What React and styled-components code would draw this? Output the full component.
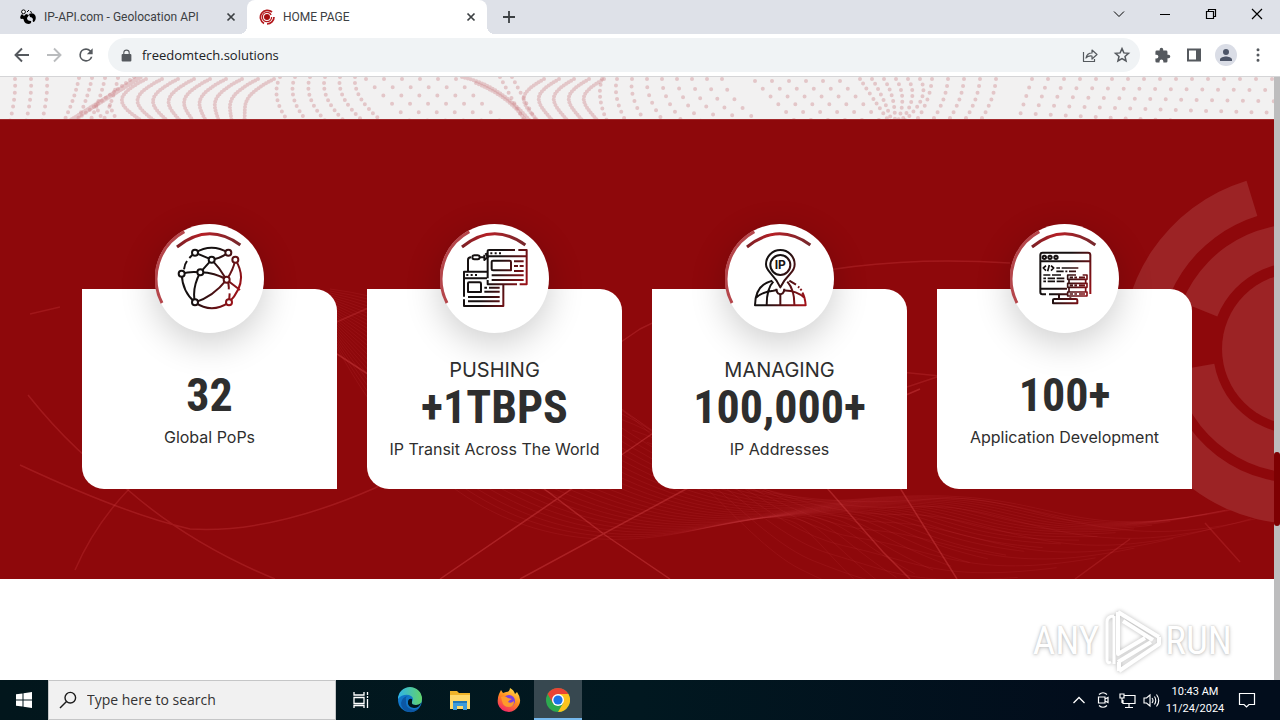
import React from "react";
import styled, { createGlobalStyle, css } from "styled-components";

const ui = '"Open Sans", "Noto Sans", sans-serif';
const tabFont = 'Roboto, "Noto Sans", sans-serif';
const geo = 'Inter, "Open Sans", sans-serif';
const condensed = '"Roboto Condensed", "DejaVu Sans Condensed", sans-serif';

const GlobalStyle = createGlobalStyle`
  *, *::before, *::after { box-sizing: border-box; }
  body { margin: 0; background: #fff; font-family: ${ui}; }
  button, input { font: inherit; color: inherit; }
  svg { display: block; }
`;

const Screen = styled.div`
  min-height: 100vh;
  display: flex;
  flex-direction: column;
`;

const PlainButton = styled.button`
  border: 0;
  padding: 0;
  background: none;
  display: flex;
  align-items: center;
  justify-content: center;
  flex: none;
`;

/* ---------- browser chrome ---------- */

const TabStrip = styled.div`
  display: flex;
  height: 34px;
  background: #dee1e8;
  color: #3c4043;
`;

const Tab = styled.div`
  position: relative;
  display: flex;
  align-items: center;
  gap: 8px;
  width: ${(p) => (p.$active ? 240 : 247)}px;
  padding: 0 8px 0 ${(p) => (p.$active ? 12 : 20)}px;
  flex: 0 1 auto;
  ${(p) =>
    p.$active &&
    css`
      background: #fff;
      border-radius: 8px 8px 0 0;
      &::before,
      &::after {
        content: "";
        position: absolute;
        bottom: 0;
        width: 8px;
        height: 8px;
      }
      &::before {
        left: -8px;
        background: radial-gradient(circle at 0 0, transparent 8px, #fff 8px);
      }
      &::after {
        right: -8px;
        background: radial-gradient(circle at 100% 0, transparent 8px, #fff 8px);
      }
    `}
`;

const TabTitle = styled(PlainButton)`
  flex: 1;
  justify-content: flex-start;
  font: 12px/16px ${tabFont};
  white-space: nowrap;
  overflow: hidden;
`;

const TabClose = styled(PlainButton)`
  width: 16px;
  height: 16px;
`;

const NewTab = styled(PlainButton)`
  width: 28px;
  margin-left: 8px;
`;

const WindowControls = styled.div`
  display: flex;
  margin-left: auto;
  color: #000;
`;

const WindowButton = styled(PlainButton)`
  width: 46px;
  height: 28px;
`;

const Toolbar = styled.div`
  display: flex;
  align-items: center;
  height: 43px;
  padding: 0 6px;
  background: #fff;
  border-bottom: 1px solid #d5d5d7;
  color: #55595e;
`;

const ToolButton = styled(PlainButton)`
  width: 32px;
  height: 32px;
  color: ${(p) => (p.$faded ? "#babcbe" : "inherit")};
`;

const AddressBar = styled.label`
  flex: 1;
  display: flex;
  align-items: center;
  height: 34px;
  margin: 0 6px;
  padding: 0 2px 0 12px;
  border-radius: 17px;
  background: #f0f3f5;
`;

const AddressInput = styled.input`
  flex: 1;
  min-width: 0;
  margin-left: 9px;
  padding: 0;
  border: 0;
  outline: 0;
  background: none;
  color: #202124;
  font: 13px/20px ${ui};
`;

const Avatar = styled.span`
  display: flex;
  align-items: center;
  justify-content: center;
  width: 22px;
  height: 22px;
  border-radius: 50%;
  background: #dadde6;
  color: #4d5568;
`;

/* ---------- page ---------- */

const Viewport = styled.div`
  flex: 1;
  display: flex;
`;

const Page = styled.main`
  flex: 1;
  min-width: 0;
  display: flex;
  flex-direction: column;
`;

const DottedBand = styled.div`
  height: 42px;
  background: #f2f1f1;
  overflow: hidden;
`;

const Stats = styled.section`
  position: relative;
  min-height: 460px;
  padding: 170px 16px 90px;
  background: #8e080b;
  overflow: hidden;
`;

const Backdrop = styled.svg`
  position: absolute;
  inset: 0;
  width: 100%;
  height: 100%;
`;

const CardGrid = styled.div`
  position: relative;
  max-width: 1110px;
  margin: 0 auto;
  display: grid;
  grid-template-columns: repeat(4, 1fr);
  gap: 30px;
`;

const Card = styled.article`
  position: relative;
  display: flex;
  flex-direction: column;
  align-items: center;
  justify-content: center;
  min-height: 200px;
  padding-top: 41px;
  background: #fff;
  border-radius: 0 22px 0 22px;
  color: #2e2e2e;
  text-align: center;
  white-space: nowrap;
`;

const Medallion = styled.div`
  position: absolute;
  top: -65px;
  left: 50%;
  margin-left: -55px;
  width: 109px;
  height: 109px;
  border-radius: 50%;
  background: #fff;
  box-shadow: 0 10px 36px rgba(0, 0, 0, 0.2);
`;

const Kicker = styled.span`
  font: 20px/24px ${geo};
`;

const Figure = styled.strong`
  margin-bottom: 5px;
  font: bold 46px/50px ${condensed};
`;

const Caption = styled.span`
  font: 16px/24px ${geo};
`;

const BlankArea = styled.div`
  flex: 1;
  min-height: 101px;
  display: flex;
  align-items: center;
  justify-content: flex-end;
  padding: 22px 42px 0 0;
  background: #fff;
`;

const Watermark = styled.div`
  display: flex;
  align-items: center;
  gap: 2px;
  color: #fff;
  font: 39px/60px ${condensed};
  text-shadow: 0 0 2px #bdbdbd, 0 1px 4px #c8c8c8;
`;

const ScrollTrack = styled.div`
  width: 6px;
  flex: none;
  display: flex;
  flex-direction: column;
  background: #bdbdbe;
`;

const ScrollThumb = styled.div`
  height: 74px;
  margin-top: 375px;
  border-radius: 3px;
  background: #7e0002;
`;

/* ---------- taskbar ---------- */

const Taskbar = styled.footer`
  display: flex;
  height: 40px;
  background: linear-gradient(90deg, #02161c, #011820 50%, #020d1c 85%);
  color: #fff;
`;

const TaskButton = styled(PlainButton)`
  width: ${(p) => p.$width || 49}px;
  ${(p) =>
    p.$active &&
    css`
      background: #374850;
      border-bottom: 2px solid #76b9ed;
      padding-top: 2px;
    `}
`;

const SearchBox = styled.label`
  display: flex;
  align-items: center;
  gap: 10px;
  width: 288px;
  padding: 0 10px;
  background: #f1f1f1;
  border: 1px solid #c5c6c7;
  color: #1b1b1b;
`;

const SearchInput = styled.input`
  flex: 1;
  min-width: 0;
  border: 0;
  padding: 0;
  outline: 0;
  background: none;
  font: 14px/20px ${ui};
  &::placeholder {
    color: #333;
    opacity: 1;
  }
`;

const Tray = styled.div`
  display: flex;
  margin-left: auto;
  padding-right: 13px;
`;

const Clock = styled.time`
  width: 64px;
  display: flex;
  flex-direction: column;
  justify-content: center;
  text-align: center;
  white-space: nowrap;
  font: 11px/17px ${tabFont};
`;

/* ---------- small drawings ---------- */

const Line = ({ size = 16, w = 2, d, box = 16, children, ...rest }) => (
  <svg width={size} height={size} viewBox={`0 0 ${box} ${box}`} fill="none" stroke="currentColor" strokeWidth={w} aria-hidden="true" {...rest}>
    {d && <path d={d} />}
    {children}
  </svg>
);

const Solid = ({ size = 18, d, box = 24 }) => (
  <svg width={size} height={size} viewBox={`0 0 ${box} ${box}`} fill="currentColor" aria-hidden="true">
    <path d={d} />
  </svg>
);

const CloseGlyph = () => <Line size={16} d="M4.5 4.5l7 7M11.5 4.5l-7 7" w={1.7} />;

const PawIcon = () => (
  <svg width="16" height="16" viewBox="0 0 16 16" aria-hidden="true">
    <path d="M2 5Q-1 8 1 10Q4 9 4 12Q5 15 9 15Q12 14 11 12Q7 12 7 9L9 6L6 5L4 7Z" />
    <path d="M9 5Q13 3 15 6Q17 10 14 13Q12 13 13 10Q12 8 10 8Z" />
    <circle cx="3.500" cy="2.800" r="1.900" fill="#fff" stroke="#000" />
    <path d="M7 3l2-2M10 2.500l2 1" stroke="#000" />
  </svg>
);

const SwirlIcon = () => (
  <svg width="16" height="16" viewBox="0 0 16 16" fill="none" stroke="#b3191d" aria-hidden="true">
    <circle cx="8" cy="8" r="3" fill="#a50d11" stroke="none" />
    <circle cx="8" cy="8" r="4.6" strokeWidth="1.300" strokeDasharray="26 3" />
    <path d="M13 3A7 7 0 1 0 5 14.400M8 15A7 7 0 0 0 15 8" strokeWidth="1.700" />
  </svg>
);

/* ---------- medallion art, drawn on a 327-unit circle ---------- */

const Ring = () => (
  <g fill="none">
    <path d="M133 65A160 160 0 0 0 66 279" stroke="#b5464b" strokeWidth="9" />
    <path d="M111 111Q205 35 301 105" stroke="url(#arc)" strokeWidth="9" />
  </g>
);

const Art = ({ children }) => (
  <svg width="109" height="109" viewBox="45 42 327 327" aria-hidden="true">
    <defs>
      <linearGradient id="arc" gradientUnits="userSpaceOnUse" x1="110" y1="0" x2="302" y2="0">
        <stop offset="0" stopColor="#7b2025" />
        <stop offset="0.4" stopColor="#b51f26" />
        <stop offset="1" stopColor="#74282c" />
      </linearGradient>
      <linearGradient id="ink" gradientUnits="userSpaceOnUse" x1="120" y1="150" x2="305" y2="230">
        <stop offset="0.45" stopColor="#151010" />
        <stop offset="1" stopColor="#a11219" />
      </linearGradient>
    </defs>
    <Ring />
    <g fill="none" stroke="url(#ink)" strokeWidth="6" strokeLinejoin="round">
      {children}
    </g>
  </svg>
);

const NODES = [[165, 128], [265, 128], [215, 149], [286, 149], [125, 191], [181, 187], [260, 209], [165, 277], [267, 277]];

const GlobeArt = () => (
  <Art>
    <path d="M165 128Q215 98 265 128M165 128L215 149Q240 146 265 128M286 149Q328 215 267 277M286 149Q280 180 260 209M215 149Q240 175 260 209M215 149L181 187M125 191Q150 183 181 187Q225 188 260 209M181 187Q155 235 165 277Q220 260 260 209L300 240M262 209Q268 228 266 238M269 250L267 277M165 277Q215 312 267 277M125 191Q127 245 165 277M132 178Q134 162 141 153M148 144L162 130" />
    {NODES.map(([x, y]) => (
      <circle key={`${x}-${y}`} cx={x} cy={y} r="9" fill="#fff" />
    ))}
  </Art>
);

const WindowsArt = () => (
  <Art>
    <path d="M188 205V122Q188 120 192 120H270M280 120H305V223H284M276 223H188V210M188 139H303M196 130h6M209 130h6M222 130h6" />
    <path d="M200 155Q200 152 204 152H254Q258 152 258 156V181H204Q200 181 200 177ZM267 154H296M267 168H279M284 168H296M267 183H296M200 196H296M200 210H296" />
    <path d="M188 185H117V260M117 268V288H235V223M117 205H186M124 195h6M137 195h6M150 195h6M129 185V150Q129 142 138 142M142 142Q142 136 148 136H158Q164 136 164 142Q164 148 158 148H148Q142 148 142 142M164 142H176M178 134V150L188 142L182 129" />
    <path d="M129 220Q129 217 132 217H164Q168 217 168 221V246H129ZM178 233H186M192 233H224M178 245H224M129 261H224M129 274H224" />
  </Art>
);

const PinFont = styled.text`
  font: bold 36px ${geo};
`;

const PinArt = () => (
  <Art>
    <path d="M211 232Q201 210 182 190Q168 175 168 163A43 43 0 0 1 254 163Q254 178 240 192Q222 210 211 232Z" />
    <circle cx="211" cy="165" r="30" />
    <PinFont x="211" y="178" textAnchor="middle" fill="#191314" stroke="none">IP</PinFont>
    <path d="M187 212Q136 224 135 286H287Q285 260 277 248M238 212L258 224M264 230l4 3M271 237l4 4M137 264Q157 245 190 242Q198 240 202 242M220 242Q257 240 284 264M190 215Q170 235 170 286M232 215Q254 240 253 286M211 254V286" />
    <path d="M199 236Q199 244 204 250L211 253L218 250Q223 244 223 236" />
  </Art>
);

const MonitorArt = () => (
  <Art>
    <path d="M153 253H142Q136 253 136 246V135Q136 128 143 128H279Q286 128 286 135V252M136 154H286M136 236H216M162 253H216M192 256V267M226 262V267M174 270Q174 267 178 267H243Q247 267 247 271V280H174Z" />
    <circle cx="148" cy="142" r="5" />
    <circle cx="165" cy="142" r="5" />
    <circle cx="183" cy="142" r="5" />
    <path d="M153 167L145 174L153 182M168 167L176 174L168 182M163 165L158 184M184 174H195M200 174H250M184 184H206M211 184H217M222 184H243M145 195H166M171 195H198M145 205H153M158 205H180M185 205H208M145 214H153M158 214H180M185 214H208" strokeWidth="5" />
    <path d="M243 195H218V208H276V195H263M218 220H276V232H218ZM218 246H276V258H218ZM222 208V220M272 208V220M222 232V246M272 232V246M224 202H234M238 202H246M252 202H270M224 226H234M238 226H246M252 226H270M224 252H234M238 252H246M252 252H270" strokeWidth="5" />
  </Art>
);

/* ---------- dotted band ---------- */

const dottedCurves = [];
const addRun = (from, to, step, make) => {
  for (let x = from; x <= to; x += step) dottedCurves.push(make(x));
};
addRun(15, 62, 16, (x) => ({ d: `M${x} 2Q${x + 1} 20 ${x - 5} 44`, gap: 7 }));
addRun(78, 126, 13, (x) => ({ d: `M${x + 1} 1Q${x - 4} 24 ${x - 14} 44`, gap: 6 }));
dottedCurves.push({ d: "M140 0L70 44", gap: 2, w: 5 }, { d: "M134 0L80 40", gap: 5 });
addRun(96, 112, 14, (x) => ({ d: `M${x} 28Q${x + 2} 36 ${x + 8} 44`, gap: 6 }));
addRun(146, 274, 16, (x) => ({ d: `M${x} 2C${x - 35} 20 ${x - 28} 28 ${x - 4 - (x - 146) / 5} 44`, gap: 3 }));
addRun(280, 355, 15, (x) => ({ d: `M${x} 0Q${x - 10 + (x - 280) / 10} 20 ${x + 8 + (x - 280) / 4} 44`, gap: 6 }));
addRun(366, 470, 18, (x) => ({ d: `M${x} 2L${x + 44} 44`, gap: 12 }));
dottedCurves.push({ d: "M462 0Q500 8 530 44", gap: 3 }, { d: "M476 6Q510 20 526 44", gap: 3 });
addRun(500, 514, 12, (x) => ({ d: `M${x} 0L${x + 24} 44`, gap: 6 }));
addRun(528, 592, 15, (x) => ({ d: `M${x + 16} 2C${x - 12} 18 ${x - 8} 24 ${x + 10} 44`, gap: 3 }));
addRun(602, 735, 15, (x) => ({ d: `M${x} 2Q${x - 6 + (x - 602) / 10} 20 ${x + 5 + (x - 602) / 4} 44`, gap: 6 + (x - 602) / 20 }));
addRun(755, 850, 17, (x) => ({ d: `M${x} 4L${x + 40} 44`, gap: 11 }));
addRun(860, 920, 12, (x) => ({ d: `M${x} 2Q${x + 12} 20 ${890 + (x - 860) / 5} 46`, gap: 6 }));
addRun(932, 1010, 16, (x) => ({ d: `M${x} 2Q${x - 2} 24 ${x - 16} 44`, gap: 7 }));
addRun(1028, 1290, 16, (x) => ({ d: `M${x + 4} 2L${x - 10 - (x - 1028) / 20} 44`, gap: 9 + (x - 1028) / 60 }));

const DotPattern = () => (
  <svg width="100%" height="42" viewBox="0 0 1274 42" preserveAspectRatio="xMidYMid slice" fill="none" stroke="#cf8a90" strokeLinecap="round" aria-hidden="true">
    {dottedCurves.map((c, i) => (
      <path key={i} d={c.d} strokeWidth={c.w || 4} strokeOpacity={0.42} strokeDasharray={`0 ${c.gap}`} />
    ))}
  </svg>
);

/* ---------- red section backdrop ---------- */

const mix = (a, b, t) => a.map((v, i) => v + (b[i] - v) * t);
const cubic = (p) => `M${p[0]} ${p[1]}C${p[2]} ${p[3]} ${p[4]} ${p[5]} ${p[6]} ${p[7]}S${p[8]} ${p[9]} ${p[10]} ${p[11]}`;
const bundle = (a, b, n) => Array.from({ length: n }, (_, i) => cubic(mix(a, b, i / (n - 1))));

const meshCurves = [
  ...bundle([330, 215, 440, 430, 590, 435, 700, 410, 790, 400, 860, 466], [330, 170, 560, 200, 640, 400, 860, 380, 1040, 440, 1280, 380], 24),
  ...bundle([560, 250, 660, 300, 740, 420, 800, 450, 860, 470, 940, 478], [690, 360, 760, 370, 820, 390, 930, 380, 1100, 450, 1290, 390], 10),
];

const sector = (r1, r2, a1, a2) => {
  const cx = 1298;
  const cy = 230;
  const pt = (r, a) => `${cx + r * Math.cos((a * Math.PI) / 180)} ${cy + r * Math.sin((a * Math.PI) / 180)}`;
  return `M${pt(r2, a1)}A${r2} ${r2} 0 0 1 ${pt(r2, a2)}L${pt(r1, a2)}A${r1} ${r1} 0 0 0 ${pt(r1, a1)}Z`;
};

const RedBackdrop = () => (
  <Backdrop viewBox="0 0 1274 460" preserveAspectRatio="xMidYMid slice" fill="none" aria-hidden="true">
    <g stroke="#c4383b" strokeOpacity="0.18" strokeWidth="1">
      {meshCurves.map((d, i) => (
        <path key={i} d={d} />
      ))}
    </g>
    <g stroke="#d8484b" strokeOpacity="0.4" strokeWidth="1.5">
      <path d="M440 460L633 328L760 240M520 460L688 369L920 270M337 235L543 369L605 416L670 460M720 235L827 369L883 433L910 460M900 369L957 460" />
      <path d="M28 276Q75 335 128 371Q190 425 275 460M20 346Q125 395 190 410Q270 415 375 369Q510 300 640 210Q800 130 1010 144M330 206L375 186" strokeOpacity="0.28" />
      <path d="M75 451Q95 405 130 369M1130 420L1075 460M1205 404L1240 443M900 253L940 257M907 268L940 257M30 195L60 188" strokeOpacity="0.24" />
    </g>
    <g fill="#9c2325">
      <circle cx="1298" cy="230" r="76" />
      <path d={sector(87, 125, 202, 290)} />
      <path d={sector(85, 124, 80, 170)} />
      <path d={sector(139, 176, 174, 253)} />
      <path d={sector(134, 175, 80, 174)} />
    </g>
    <path d="M0 0.5H1274" stroke="#a2282b" />
  </Backdrop>
);

const STATS = [
  { art: GlobeArt, figure: "32", caption: "Global PoPs" },
  { art: WindowsArt, kicker: "PUSHING", figure: "+1TBPS", caption: "IP Transit Across The World" },
  { art: PinArt, kicker: "MANAGING", figure: "100,000+", caption: "IP Addresses" },
  { art: MonitorArt, figure: "100+", caption: "Application Development" },
];

/* ---------- application icons ---------- */

const EdgeIcon = () => (
  <svg width="26" height="26" viewBox="0 0 26 26" aria-hidden="true">
    <defs>
      <linearGradient id="edgeTop" x1="0" x2="1">
        <stop offset="0" stopColor="#2fb4e9" />
        <stop offset="1" stopColor="#63d36b" />
      </linearGradient>
    </defs>
    <circle cx="13" cy="13" r="12" fill="#1176c8" />
    <path d="M1 12A12 12 0 0 1 25 12Q25 18 19 18Q14 18 15 15Q18 10 12 8Q5 7 1 12Z" fill="url(#edgeTop)" />
    <path d="M9 13Q8 20 14 22Q19 24 23 20Q19 26 12 25Q4 23 4 16Q5 10 11 9Q8 10 9 13Z" fill="#0c57a4" />
    <path d="M15 15Q14 18 19 18Q22 18 24 16Q22 21 17 21Q10 20 11 14Q12 11 15 12Z" fill="#02161c" />
  </svg>
);

const FolderIcon = () => (
  <svg width="24" height="24" viewBox="0 0 24 24" aria-hidden="true">
    <path d="M2 3H9L11 5H22V21H2Z" fill="#f0b429" />
    <path d="M2 7H22V21H2Z" fill="#ffd96b" />
    <path d="M5 13H19V22H15V18H9V22H5Z" fill="#3d9bdc" />
    <path d="M5 13H19V15H5Z" fill="#2277b8" />
  </svg>
);

const FirefoxIcon = () => (
  <svg width="26" height="26" viewBox="0 0 26 26" aria-hidden="true">
    <defs>
      <linearGradient id="fox" x1="0.8" y1="0" x2="0.3" y2="1">
        <stop offset="0" stopColor="#ffe14a" />
        <stop offset="0.5" stopColor="#ff8a1e" />
        <stop offset="1" stopColor="#f4236a" />
      </linearGradient>
    </defs>
    <path d="M3 7L5 3L7 6L10 5Q14 5 14 1Q18 3 19 7L21 5Q26 12 23 18Q19 25 13 25Q4 24 2 17Q1 12 3 7Z" fill="url(#fox)" />
    <circle cx="13" cy="14" r="6" fill="#7a3fe0" />
    <path d="M5 10Q9 8 12 11L16 12Q13 13 12 15Q15 17 18 14Q18 20 13 20Q7 20 6 14Z" fill="#ff9a2b" />
  </svg>
);

const ChromeIcon = () => (
  <svg width="24" height="24" viewBox="0 0 24 24" aria-hidden="true">
    <circle cx="12" cy="12" r="12" fill="#2da94f" />
    <path d="M1.6 6A12 12 0 0 1 22.4 6H12L6.8 15Z" fill="#e94335" />
    <path d="M22.4 6A12 12 0 0 1 12 24L17.2 15L12 6Z" fill="#fcc31e" />
    <circle cx="12" cy="12" r="6" fill="#fff" />
    <circle cx="12" cy="12" r="4.6" fill="#1a73e8" />
  </svg>
);

const LogoSvg = styled.svg`
  filter: drop-shadow(0 0 2px #b9b9b9);
`;

const PlayLogo = () => (
  <LogoSvg width="62" height="66" viewBox="0 0 62 66" fill="none" stroke="#fff" strokeWidth="4" strokeLinejoin="round" aria-hidden="true">
    <path d="M13 8V56M13 8Q6 8 6 14V52Q6 56 10 54" strokeWidth="3" />
    <path d="M17 4L58 29M17 4V46L44 30M22 13L52 32M18 63L58 36L58 29M17 54L50 34M18 63V54" />
  </LogoSvg>
);

export default function App() {
  return (
    <Screen>
      <GlobalStyle />
      <TabStrip>
        <Tab>
          <PawIcon />
          <TabTitle>IP-API.com - Geolocation API</TabTitle>
          <TabClose aria-label="Close tab"><CloseGlyph /></TabClose>
        </Tab>
        <Tab $active>
          <SwirlIcon />
          <TabTitle>HOME PAGE</TabTitle>
          <TabClose aria-label="Close tab"><CloseGlyph /></TabClose>
        </Tab>
        <NewTab aria-label="New tab"><Line d="M8 2V14M2 8H14" w={1.8} /></NewTab>
        <WindowControls>
          <WindowButton aria-label="Search tabs"><Line d="M3 5.5L8 10.5L13 5.5" w={1} /></WindowButton>
          <WindowButton aria-label="Minimize"><Line d="M3 8.5H13" w={1} /></WindowButton>
          <WindowButton aria-label="Restore"><Line d="M3.5 5.5H10.5V12.5H3.5ZM5.5 5.5V3.5H12.5V10.5H10.5" w={1.2} /></WindowButton>
          <WindowButton aria-label="Close"><Line d="M3 3L13 13M13 3L3 13" w={1.2} /></WindowButton>
        </WindowControls>
      </TabStrip>

      <Toolbar>
        <ToolButton aria-label="Back"><Line d="M15 8H2M8 1.5L1.5 8L8 14.5" w={1.9} /></ToolButton>
        <ToolButton $faded aria-label="Forward"><Line d="M1 8H14M8 1.5L14.5 8L8 14.5" w={1.9} /></ToolButton>
        <ToolButton aria-label="Reload"><Solid size={20} d="M17.65 6.35A7.96 7.96 0 0 0 12 4a8 8 0 1 0 7.73 10h-2.08A6 6 0 1 1 12 6c1.66 0 3.14.69 4.22 1.78L13 11h7V4z" /></ToolButton>
        <AddressBar>
          <Solid size={13} box={24} d="M19 9h-1V7A6 6 0 0 0 6 7v2H5a2 2 0 0 0-2 2v10a2 2 0 0 0 2 2h14a2 2 0 0 0 2-2V11a2 2 0 0 0-2-2zM8 7a4 4 0 0 1 8 0v2H8z" />
          <AddressInput aria-label="Address" defaultValue="freedomtech.solutions" />
          <ToolButton aria-label="Share"><Line d="M1.5 5V14.5H12.5V12M4 11Q5 6 10 6V3L15 7.5L10 12V9Q6 8.500 4 11Z" w={1.2} strokeLinejoin="round" /></ToolButton>
          <ToolButton aria-label="Bookmark"><Line box={24} size={18} w={2} d="M12 3.500L14.500 9.200L20.700 9.800L16 13.900L17.400 20L12 16.800L6.600 20L8 13.900L3.300 9.800L9.500 9.200Z" /></ToolButton>
        </AddressBar>
        <ToolButton aria-label="Extensions"><Solid size={17} d="M20.500 11H19V7a2 2 0 0 0-2-2h-4V3.500a2.500 2.500 0 0 0-5 0V5H4a2 2 0 0 0-2 2v3.800h1.500a2.700 2.700 0 0 1 0 5.400H2V20a2 2 0 0 0 2 2h3.800v-1.500a2.700 2.700 0 0 1 5.400 0V22H17a2 2 0 0 0 2-2v-4h1.500a2.500 2.500 0 0 0 0-5z" /></ToolButton>
        <ToolButton aria-label="Side panel"><Line w={2}><path d="M2 2.500H14V13.500H2Z" /><path d="M12 2V14" strokeWidth="4" /></Line></ToolButton>
        <ToolButton aria-label="Profile"><Avatar><Solid size={18} d="M12 12a4 4 0 1 0 0-8 4 4 0 0 0 0 8zm0 2c-3 0-8 1.400-8 4v2h16v-2c0-2.600-5-4-8-4z" /></Avatar></ToolButton>
        <ToolButton aria-label="Menu"><Solid size={20} d="M12 7.500a1.800 1.800 0 1 0 0-3.600 1.800 1.800 0 0 0 0 3.600zm0 6.300a1.800 1.800 0 1 0 0-3.600 1.800 1.800 0 0 0 0 3.600zm0 6.300a1.800 1.800 0 1 0 0-3.600 1.800 1.800 0 0 0 0 3.600z" /></ToolButton>
      </Toolbar>

      <Viewport>
        <Page>
          <DottedBand><DotPattern /></DottedBand>
          <Stats>
            <RedBackdrop />
            <CardGrid>
              {STATS.map(({ art: Drawing, kicker, figure, caption }) => (
                <Card key={caption}>
                  <Medallion><Drawing /></Medallion>
                  {kicker && <Kicker>{kicker}</Kicker>}
                  <Figure>{figure}</Figure>
                  <Caption>{caption}</Caption>
                </Card>
              ))}
            </CardGrid>
          </Stats>
          <BlankArea>
            <Watermark>
              <span>ANY</span>
              <PlayLogo />
              <span>RUN</span>
            </Watermark>
          </BlankArea>
        </Page>
        <ScrollTrack><ScrollThumb /></ScrollTrack>
      </Viewport>

      <Taskbar>
        <TaskButton $width={48} aria-label="Start">
          <Solid size={16} box={16} d="M0 2.300L6.500 1.400V7.500H0ZM7.500 1.200L16 0V7.500H7.500ZM0 8.500H6.500V14.600L0 13.700ZM7.500 8.500H16V16L7.500 14.800Z" />
        </TaskButton>
        <SearchBox>
          <Line size={18} box={18} w={1.4} d="M1 17L7.500 10.500"><circle cx="11.300" cy="6.700" r="5.300" /></Line>
          <SearchInput type="search" aria-label="Search" placeholder="Type here to search" />
        </SearchBox>
        <TaskButton aria-label="Task view">
          <Line size={18} box={18} w={1.3} d="M2 1V4H12V1M2 6.500H12V12.500H2ZM2 17V14.500H12V17M15.500 1V4M15.500 8V17M15.500 5V7" />
        </TaskButton>
        <TaskButton $width={50} aria-label="Edge"><EdgeIcon /></TaskButton>
        <TaskButton aria-label="File Explorer"><FolderIcon /></TaskButton>
        <TaskButton $width={50} aria-label="Firefox"><FirefoxIcon /></TaskButton>
        <TaskButton $width={48} $active aria-label="Chrome"><ChromeIcon /></TaskButton>
        <Tray>
          <TaskButton $width={24} aria-label="Show hidden icons"><Line size={14} box={14} d="M1.500 10L7 4.500L12.500 10" w={1.3} /></TaskButton>
          <TaskButton $width={24} aria-label="Meet now"><Line d="M3.500 5H10V11H3.500ZM10 7L13 5.500V10.500L10 9M4 2.500Q8 -1 12 2.500M4 13.500Q8 17 12 13.500" w={1.2} /></TaskButton>
          <TaskButton $width={24} aria-label="Network"><Line size={17} box={17} d="M5 3.500H16V11.500H4V8M10 11.500V15M6 15.500H14M1 2H5V6H1ZM3 6V11" w={1.2} /></TaskButton>
          <TaskButton $width={24} aria-label="Volume"><Line size={17} box={17} d="M1 6H3.500L7 3V14L3.500 11H1ZM9 6Q11 8.500 9 11M11.500 4.500Q14 8.500 11.500 12.500M13.500 2.500Q18 8.500 13.500 14.500" w={1.1} /></TaskButton>
          <Clock>
            <span>10:43 AM</span>
            <span>11/24/2024</span>
          </Clock>
          <TaskButton $width={40} aria-label="Notifications"><Line size={18} box={18} d="M1.500 2.500H16.500V13.500H11L8.500 16L6 13.500H1.500Z" w={1.2} /></TaskButton>
        </Tray>
      </Taskbar>
    </Screen>
  );
}
